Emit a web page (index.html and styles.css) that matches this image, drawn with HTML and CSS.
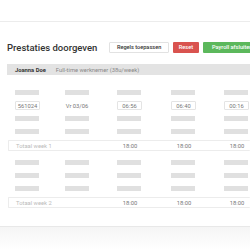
FILE: index.html
```html
<!DOCTYPE html>
<html lang="nl">
<head>
    <meta charset="UTF-8">
    <title>Prestaties doorgeven</title>
    <link rel="stylesheet" href="styles.css">
</head>
<body>
    <div class="topbar"></div>
    <div class="page">
        <div class="head">
            <h1>Prestaties doorgeven</h1>
            <div class="actions">
                <button class="btn btn-default">Regels toepassen</button>
                <button class="btn btn-danger">Reset</button>
                <button class="btn btn-success">Payroll afsluiten</button>
            </div>
        </div>

        <div class="employee">
            <span class="name">Joanna Doe</span>
            <span class="contract">Full-time werknemer (38u/week)</span>
        </div>

        <div class="grid">
            <div class="row">
                <span class="bar"></span><span class="bar"></span><span class="bar"></span><span class="bar"></span><span class="bar"></span>
            </div>
            <div class="row">
                <span class="field">561024</span>
                <span class="cell">Vr 03/06</span>
                <span class="field">06:56</span>
                <span class="field">06:40</span>
                <span class="field">00:16</span>
            </div>
            <div class="row">
                <span class="bar"></span><span class="bar"></span><span class="bar"></span><span class="bar"></span><span class="bar"></span>
            </div>
            <div class="row">
                <span class="bar"></span><span class="bar"></span><span class="bar"></span><span class="bar"></span><span class="bar"></span>
            </div>
            <div class="row total">
                <span class="label">Totaal week 1</span>
                <span class="cell">18:00</span>
                <span class="cell">18:00</span>
                <span class="cell">18:00</span>
            </div>
            <div class="row">
                <span class="bar"></span><span class="bar"></span><span class="bar"></span><span class="bar"></span><span class="bar"></span>
            </div>
            <div class="row">
                <span class="bar"></span><span class="bar"></span><span class="bar"></span><span class="bar"></span><span class="bar"></span>
            </div>
            <div class="row">
                <span class="bar"></span><span class="bar"></span><span class="bar"></span><span class="bar"></span><span class="bar"></span>
            </div>
            <div class="row total">
                <span class="label">Totaal week 2</span>
                <span class="cell">18:00</span>
                <span class="cell">18:00</span>
                <span class="cell">18:00</span>
            </div>
        </div>
    </div>
    <div class="footer"></div>
</body>
</html>
```

FILE: styles.css
```css
body {
    margin: 0;
    width: 250px;
    height: 250px;
    overflow: hidden;
    font-family: Roboto, "Liberation Sans", sans-serif;
    color: #333;
    background: #fff;
}
.topbar {
    height: 21px;
    border-bottom: 1px solid #ececec;
}
.page {
    padding: 17px 0 0 7px;
    height: 205px;
    border-bottom: 1px solid #e8e8e8;
    box-sizing: border-box;
}
.head {
    display: flex;
    align-items: center;
    height: 16px;
    white-space: nowrap;
}
h1 {
    margin: 0;
    font-size: 9.5px;
    font-weight: 500;
    color: #333;
}
.actions {
    display: flex;
    gap: 4px;
    margin-left: 12px;
}
.btn {
    font-family: inherit;
    font-size: 5.6px;
    font-weight: 500;
    height: 11px;
    padding: 0 5px;
    border-radius: 1px;
    border: 1px solid transparent;
    white-space: nowrap;
}
.btn-default {
    background: #fff;
    border-color: #e2e2e2;
    color: #333;
    padding: 0 6.5px;
}
.btn-danger {
    background: #d9534f;
    color: #fff;
}
.btn-success {
    background: #5cb85c;
    color: #fff;
    padding: 0 8px;
}
.employee {
    display: flex;
    gap: 10px;
    align-items: center;
    height: 11px;
    margin-top: 9px;
    padding-left: 8px;
    background: #e3e3e3;
    font-size: 5.8px;
    white-space: nowrap;
}
.name {
    font-weight: 700;
    color: #333;
}
.contract {
    color: #888;
}
.grid {
    margin-top: 11px;
}
.row {
    display: grid;
    grid-template-columns: 50px 52px 54px 53px 53px;
    align-items: center;
    height: 13px;
    padding-left: 8px;
    font-size: 5.8px;
    color: #777;
}
.bar {
    width: 24px;
    height: 4.5px;
    background: #e0e0e0;
}
.field {
    width: 25px;
    height: 9px;
    line-height: 8px;
    text-align: center;
    border: 1px solid #e4e4e4;
    border-radius: 1px;
    box-sizing: border-box;
    background: #fff;
}
.cell {
    width: 24px;
    text-align: center;
    white-space: nowrap;
}
.total {
    grid-template-columns: 102px 54px 53px 53px;
    height: 11px;
    margin: 2px 0 5px 1px;
    padding-left: 7px;
    border: 1px solid #ececec;
    border-right: none;
    border-radius: 1px;
    box-sizing: border-box;
}
.total .label {
    color: #bbb;
}
.footer {
    height: 23px;
    background: linear-gradient(#f5f5f5, #fff);
}
```
